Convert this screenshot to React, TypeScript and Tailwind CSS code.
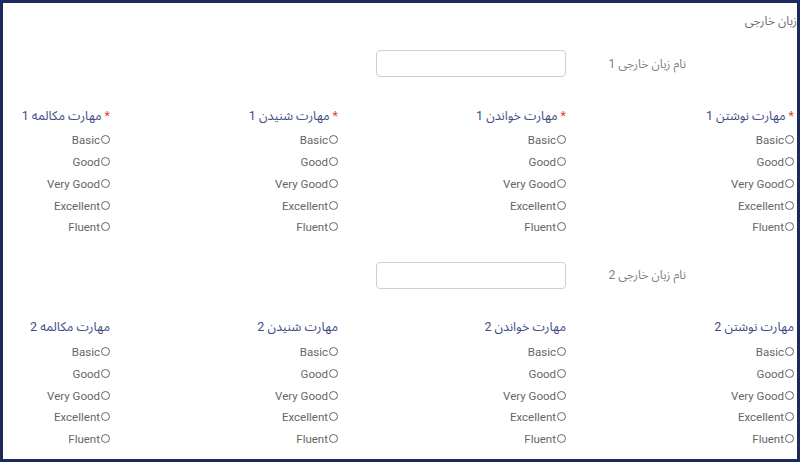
const levels = ['Basic', 'Good', 'Very Good', 'Excellent', 'Fluent']

const skills = ['مهارت نوشتن', 'مهارت خواندن', 'مهارت شنیدن', 'مهارت مکالمه']

function Option({ label }: { label: string }) {
  return (
    <div className="flex h-[21.75px] items-center gap-px">
      <span className="mt-[-2px] inline-block h-[9px] w-[9px] rounded-full border border-[#666]" />
      <span dir="ltr" className="text-[11.5px] text-[#666]">
        {label}
      </span>
    </div>
  )
}

function LanguageBlock({ n, required }: { n: number; required: boolean }) {
  return (
    <div className="pr-[3px]">
      <div className="grid grid-cols-[228px_228px_1fr] items-center">
        <div className="pr-[108px] text-[12px] text-[#808080]">نام زبان خارجی {n}</div>
        <div className="pr-0">
          <div className="h-[27px] w-[190px] rounded-[4px] border border-[#cfcfcf] bg-white" />
        </div>
        <div />
      </div>
      <div className="mt-[29px] grid grid-cols-[228px_228px_228px_1fr]">
        {skills.map((s) => (
          <div key={s}>
            <div className="flex h-[20px] items-center text-[12.5px] text-[#3e4c85]">
              {required && <span className="ml-[3px] text-[#e0413a]">*</span>}
              <span>
                {s} {n}
              </span>
            </div>
            <div className="mt-[4px]">
              {levels.map((l) => (
                <Option key={l} label={l} />
              ))}
            </div>
          </div>
        ))}
      </div>
    </div>
  )
}

export default function App() {
  return (
    <div
      dir="rtl"
      className="h-[462px] w-[800px] overflow-hidden border-[3px] border-[#1f2a5c] bg-white font-['Roboto','Noto_Sans_Arabic','DejaVu_Sans',sans-serif]"
    >
      <div className="pt-[9px] text-[12px] leading-[18px] text-[#6b6b6b]">زبان خارجی</div>
      <div className="mt-[20px]">
        <LanguageBlock n={1} required />
      </div>
      <div className="mt-[23px]">
        <LanguageBlock n={2} required={false} />
      </div>
    </div>
  )
}
